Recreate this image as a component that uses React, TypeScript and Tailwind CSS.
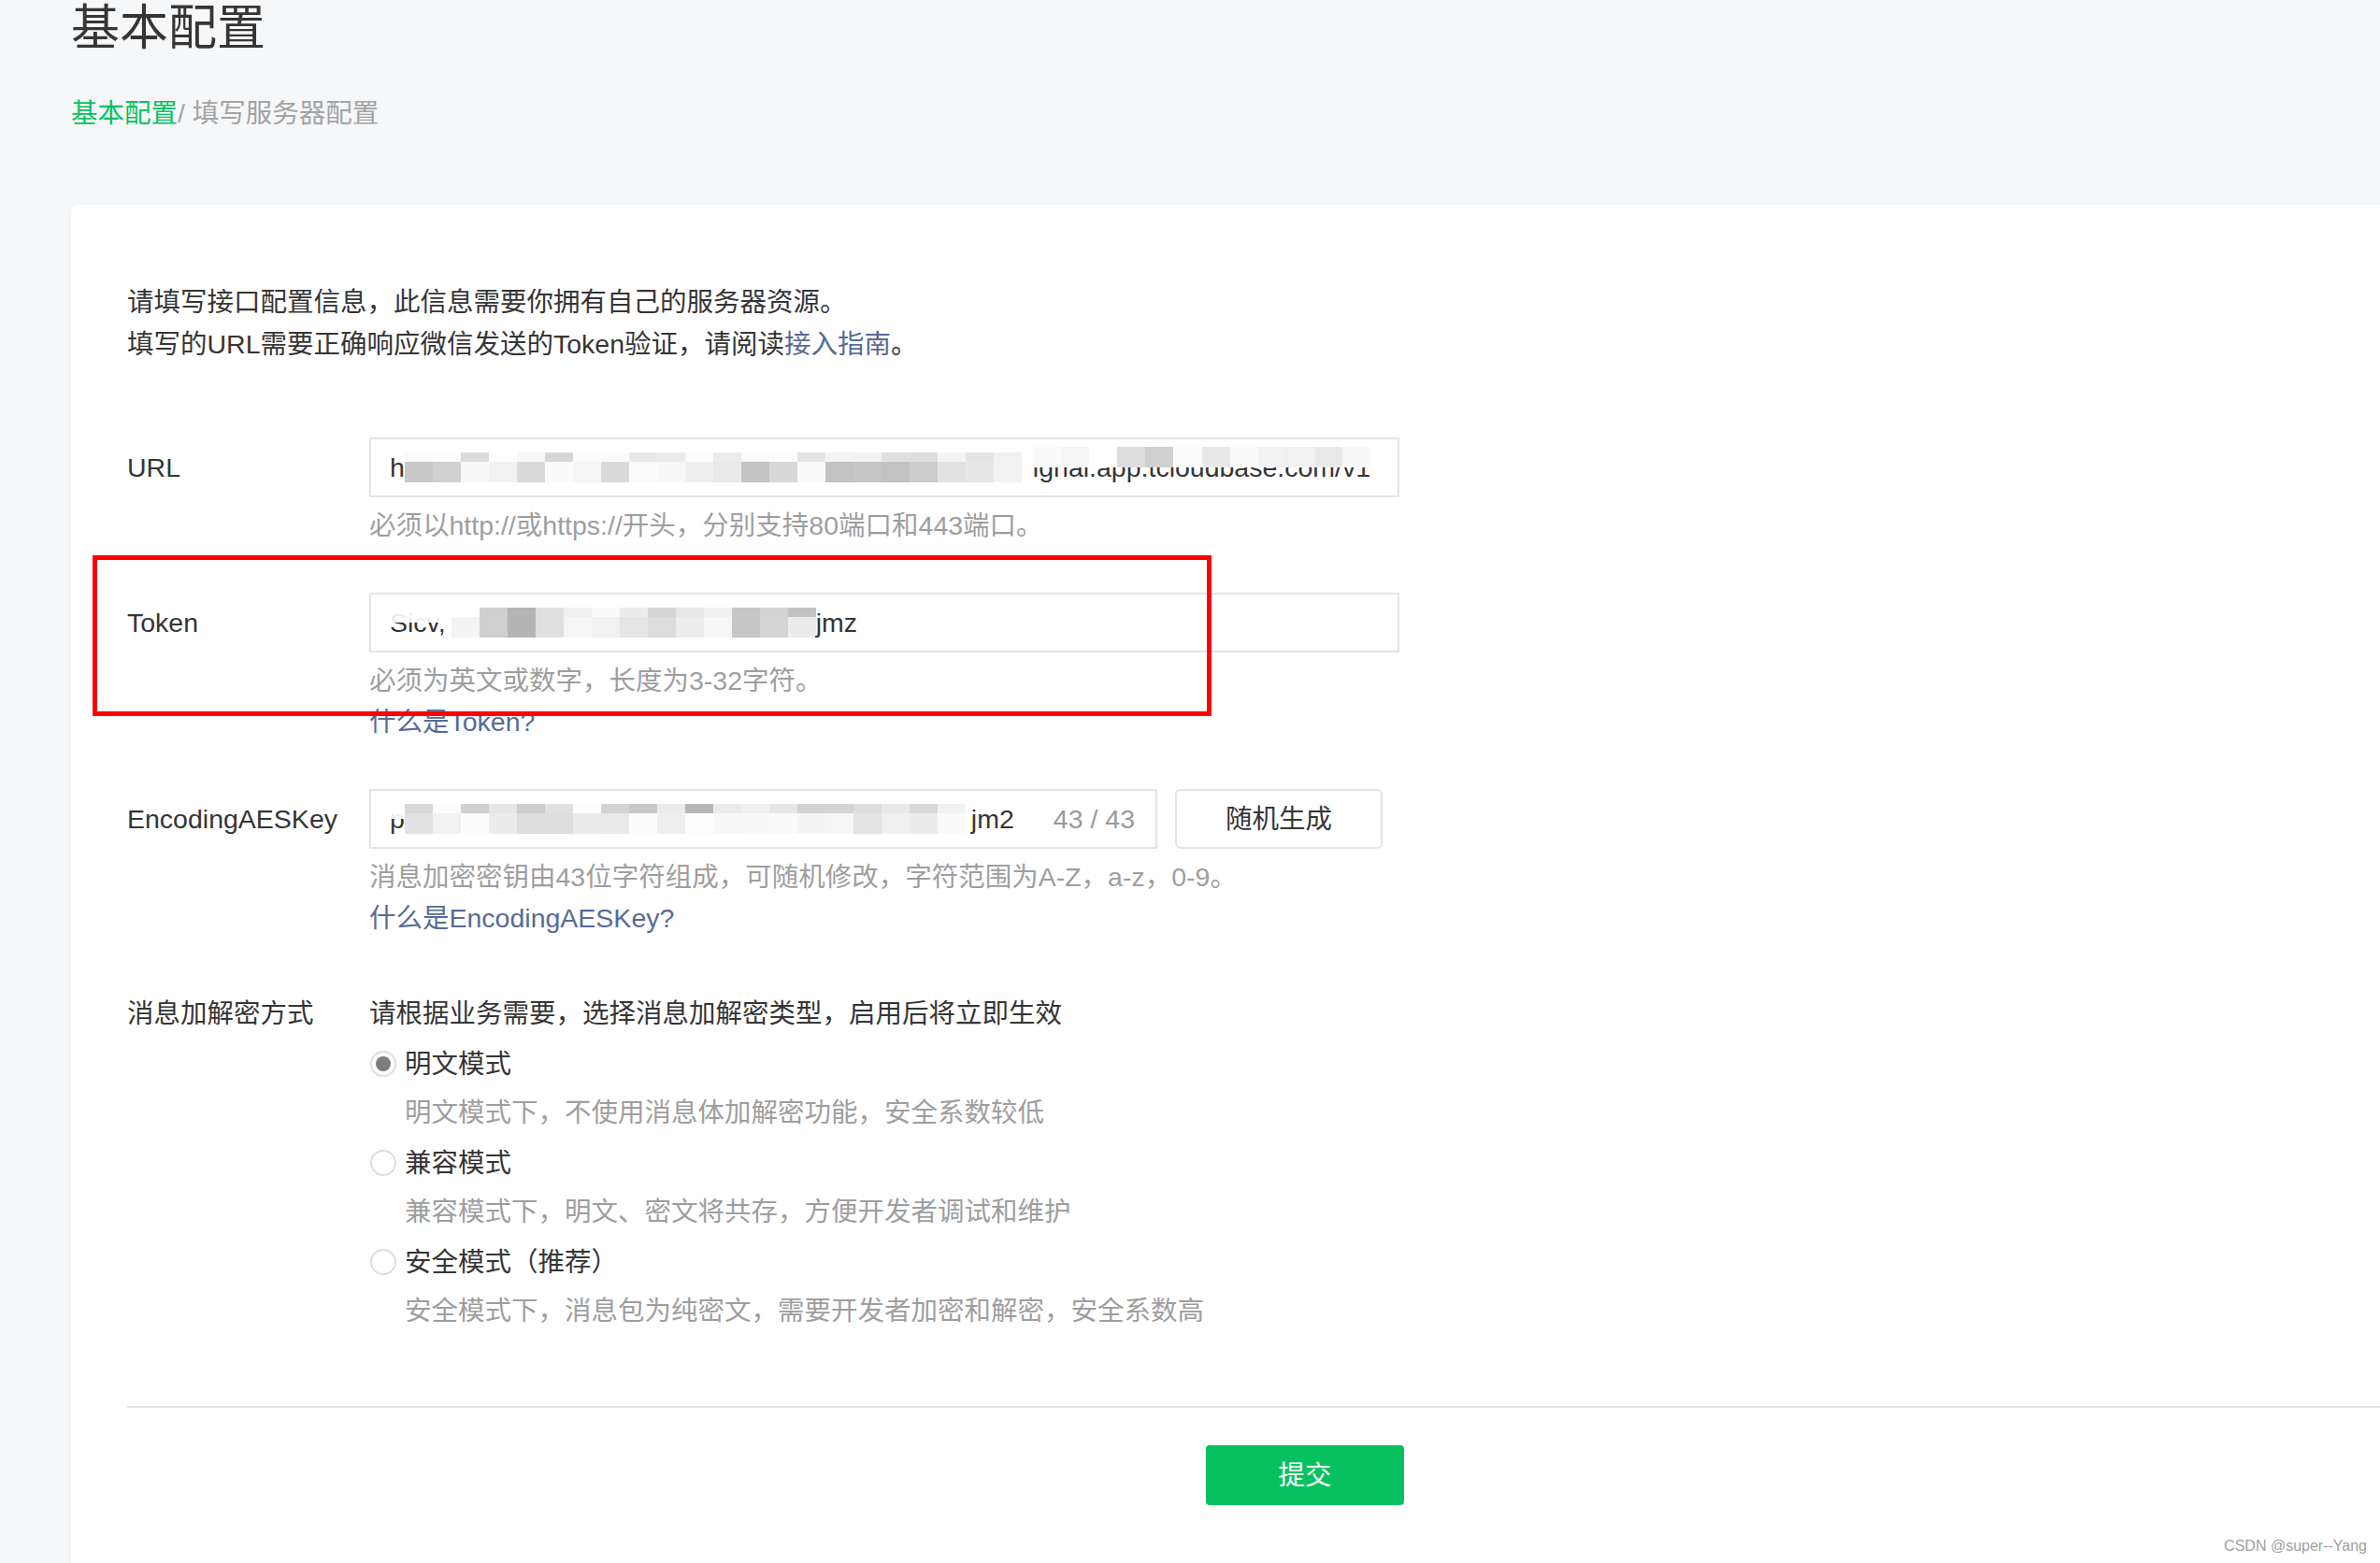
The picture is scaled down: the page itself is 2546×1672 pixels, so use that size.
import type { ReactNode } from 'react';

const urlCols: [string, string][] = [
  ['#fbfbfb', '#c9c9c9'], ['#fdfdfd', '#d0d0d0'], ['#dcdcdc', '#f8f8f8'], ['#fefefe', '#f1f1f1'],
  ['#f7f7f7', '#d9d9d9'], ['#d6d6d6', '#fafafa'], ['#fcfcfc', '#f6f6f6'], ['#f9f9f9', '#dadada'],
  ['#e8e8e8', '#fbfbfb'], ['#ebebeb', '#f7f7f7'], ['#fcfcfc', '#efefef'], ['#ececec', '#e9e9e9'],
  ['#fbfbfb', '#c4c4c4'], ['#fdfdfd', '#d8d8d8'], ['#e4e4e4', '#fafafa'], ['#f5f5f5', '#c3c3c3'],
  ['#f3f3f3', '#c6c6c6'], ['#e0e0e0', '#c2c2c2'], ['#dedede', '#cdcdcd'], ['#f4f4f4', '#e2e2e2'],
  ['#e5e5e5', '#e7e7e7'], ['#f1f1f1', '#f2f2f2'],
];

const tokenCols: [string, string][] = [
  ['#ffffff', '#f4f4f4'], ['#cfcfcf', '#cfcfcf'], ['#b4b4b4', '#b4b4b4'], ['#e0e0e0', '#e0e0e0'],
  ['#f0f0f0', '#f6f6f6'], ['#fafafa', '#f1f1f1'], ['#ececec', '#e6e6e6'], ['#d6d6d6', '#dcdcdc'],
  ['#e8e8e8', '#ededed'], ['#f0f0f0', '#f7f7f7'], ['#c6c6c6', '#c6c6c6'], ['#d4d4d4', '#d4d4d4'],
  ['#c2c2c2', '#ebebeb'],
];

const aesCols: [string, string][] = [
  ['#d8d8d8', '#e2e2e2'], ['#fbfbfb', '#f1f1f1'], ['#d0d0d0', '#fcfcfc'], ['#e6e6e6', '#ececec'],
  ['#cdcdcd', '#dedede'], ['#e1e1e1', '#dddddd'], ['#fdfdfd', '#eaeaea'], ['#d3d3d3', '#e9e9e9'],
  ['#c8c8c8', '#fbfbfb'], ['#ebebeb', '#efefef'], ['#b6b6b6', '#fdfdfd'], ['#ebebeb', '#f8f8f8'],
  ['#f0f0f0', '#f9f9f9'], ['#e6e6e6', '#fafafa'], ['#d2d2d2', '#f4f4f4'], ['#d4d4d4', '#f6f6f6'],
  ['#dddddd', '#e3e3e3'], ['#e8e8e8', '#f0f0f0'], ['#d9d9d9', '#ececec'], ['#f2f2f2', '#fafafa'],
];

const tailCover = ['#fafafa', '#f6f6f6', '#ffffff', '#dcdcdc', '#d0d0d0', '#fbfbfb', '#e8e8e8', '#fafafa', '#f3f3f3', '#f1f1f1', '#e9e9e9', '#f8f8f8'];

function Mosaic({ cols }: { cols: [string, string][] }) {
  return (
    <div className="flex shrink-0">
      {cols.map(([top, bottom], i) => (
        <div key={i} className="flex w-[30px] flex-col">
          <div className="h-[10px]" style={{ backgroundColor: top }} />
          <div className="h-[22px]" style={{ backgroundColor: bottom }} />
        </div>
      ))}
    </div>
  );
}

// text whose upper half is smeared over
function Smudged({ children, shades }: { children: ReactNode; shades?: string[] }) {
  return (
    <span className="relative inline-block shrink-0">
      {children}
      {shades ? (
        <span className="absolute inset-x-0 top-0 flex h-[50%]">
          {shades.map((s, i) => (
            <span key={i} className="flex-1" style={{ backgroundColor: s }} />
          ))}
        </span>
      ) : (
        <span className="absolute inset-x-0 top-0 h-[50%] bg-white/90" />
      )}
    </span>
  );
}

function Radio({ checked }: { checked?: boolean }) {
  return (
    <span className="flex h-[28px] w-[28px] shrink-0 items-center justify-center rounded-full border-2 border-[#dedede] bg-white">
      {checked && <span className="h-[16px] w-[16px] rounded-full bg-[#7d7d7d]" />}
    </span>
  );
}

const modes = [
  { title: '明文模式', desc: '明文模式下，不使用消息体加解密功能，安全系数较低', checked: true },
  { title: '兼容模式', desc: '兼容模式下，明文、密文将共存，方便开发者调试和维护' },
  { title: '安全模式（推荐）', desc: '安全模式下，消息包为纯密文，需要开发者加密和解密，安全系数高' },
];

export default function App() {
  return (
    <div className="relative h-[1672px] w-[2546px] overflow-hidden bg-[#f6f7f9] font-['Liberation_Sans','Noto_Sans_CJK_SC',sans-serif] text-[#353535]">
      <div className="pl-[76px]">
        <h1 className="text-[52px] font-normal leading-[60px] text-[#353535]">基本配置</h1>
        <div className="mt-[41px] text-[28.5px] leading-[40px]">
          <span className="text-[#07c160]">基本配置</span>
          <span className="text-[#a3a3a3]">/ 填写服务器配置</span>
        </div>

        {/* Card */}
        <div className="mt-[78px] h-[1500px] w-[2600px] rounded-tl-[8px] bg-white pl-[60px] pt-[82px] shadow-[0_0_6px_rgba(0,0,0,0.04)]">
          <div className="text-[28.5px] leading-[45px]">
            <p>请填写接口配置信息，此信息需要你拥有自己的服务器资源。</p>
            <p>
              填写的URL需要正确响应微信发送的Token验证，请阅读<span className="text-[#576b95]">接入指南</span>。
            </p>
          </div>

          {/* URL */}
          <div className="mt-[77px] flex text-[28.5px] leading-[44px]">
            <div className="flex h-[64px] w-[259px] shrink-0 items-center">URL</div>
            <div>
              <div className="flex h-[64px] w-[1102px] items-center overflow-hidden border-2 border-[#e4e4ea] px-[20px]">
                <span className="shrink-0">h</span>
                <Mosaic cols={urlCols} />
                <span className="ml-[12px]">
                  <Smudged shades={tailCover}>ignal.app.tcloudbase.com/v1</Smudged>
                </span>
              </div>
              <p className="mt-[8px] text-[#9e9e9e]">必须以http://或https://开头，分别支持80端口和443端口。</p>
            </div>
          </div>

          {/* Token */}
          <div className="mt-[50px] flex text-[28.5px] leading-[44px]">
            <div className="flex h-[64px] w-[259px] shrink-0 items-center">Token</div>
            <div>
              <div className="flex h-[64px] w-[1102px] items-center overflow-hidden border-2 border-[#e4e4ea] px-[20px]">
                <Smudged>Sicv,</Smudged>
                <span className="ml-[6px]">
                  <Mosaic cols={tokenCols} />
                </span>
                <span className="shrink-0">jmz</span>
              </div>
              <p className="mt-[8px] text-[#9e9e9e]">必须为英文或数字，长度为3-32字符。</p>
              <p className="text-[#576b95]">什么是Token?</p>
            </div>
          </div>

          {/* EncodingAESKey */}
          <div className="mt-[50px] flex text-[28.5px] leading-[44px]">
            <div className="flex h-[64px] w-[259px] shrink-0 items-center">EncodingAESKey</div>
            <div>
              <div className="flex items-center gap-[19px]">
                <div className="flex h-[64px] w-[843px] items-center overflow-hidden border-2 border-[#e4e4ea] pl-[20px] pr-[22px]">
                  <Smudged>p</Smudged>
                  <Mosaic cols={aesCols} />
                  <span className="ml-[6px] shrink-0">jm2</span>
                  <span className="ml-auto shrink-0 text-[#9a9a9a]">43 / 43</span>
                </div>
                <button className="h-[64px] w-[222px] rounded-[6px] border-2 border-[#e4e4ea] bg-white text-[28.5px] text-[#353535]">
                  随机生成
                </button>
              </div>
              <p className="mt-[8px] text-[#9e9e9e]">消息加密密钥由43位字符组成，可随机修改，字符范围为A-Z，a-z，0-9。</p>
              <p className="text-[#576b95]">什么是EncodingAESKey?</p>
            </div>
          </div>

          {/* Encryption mode */}
          <div className="mt-[58px] flex text-[28.5px] leading-[44px]">
            <div className="w-[259px] shrink-0">消息加解密方式</div>
            <div>
              <p>请根据业务需要，选择消息加解密类型，启用后将立即生效</p>
              {modes.map((m) => (
                <div key={m.title} className="mt-[10px]">
                  <div className="flex items-center gap-[9px] pl-[1px]">
                    <Radio checked={m.checked} />
                    <span>{m.title}</span>
                  </div>
                  <p className="mt-[8px] pl-[38px] text-[#9e9e9e]">{m.desc}</p>
                </div>
              ))}
            </div>
          </div>

          <div className="mt-[80px] h-[2px] bg-[#e4e4ea]" />

          <button className="ml-[1154px] mt-[40px] h-[64px] w-[212px] rounded-[4px] bg-[#07c160] text-[28.5px] text-white">
            提交
          </button>
        </div>
      </div>

      {/* annotation box */}
      <div className="absolute left-[99px] top-[594px] h-[172px] w-[1197px] border-[5px] border-[#ff0000]" />

      {/* watermark */}
      <div className="absolute bottom-[6px] right-[14px] text-[16px] text-[#a0a0a0]">CSDN @super--Yang</div>
    </div>
  );
}
